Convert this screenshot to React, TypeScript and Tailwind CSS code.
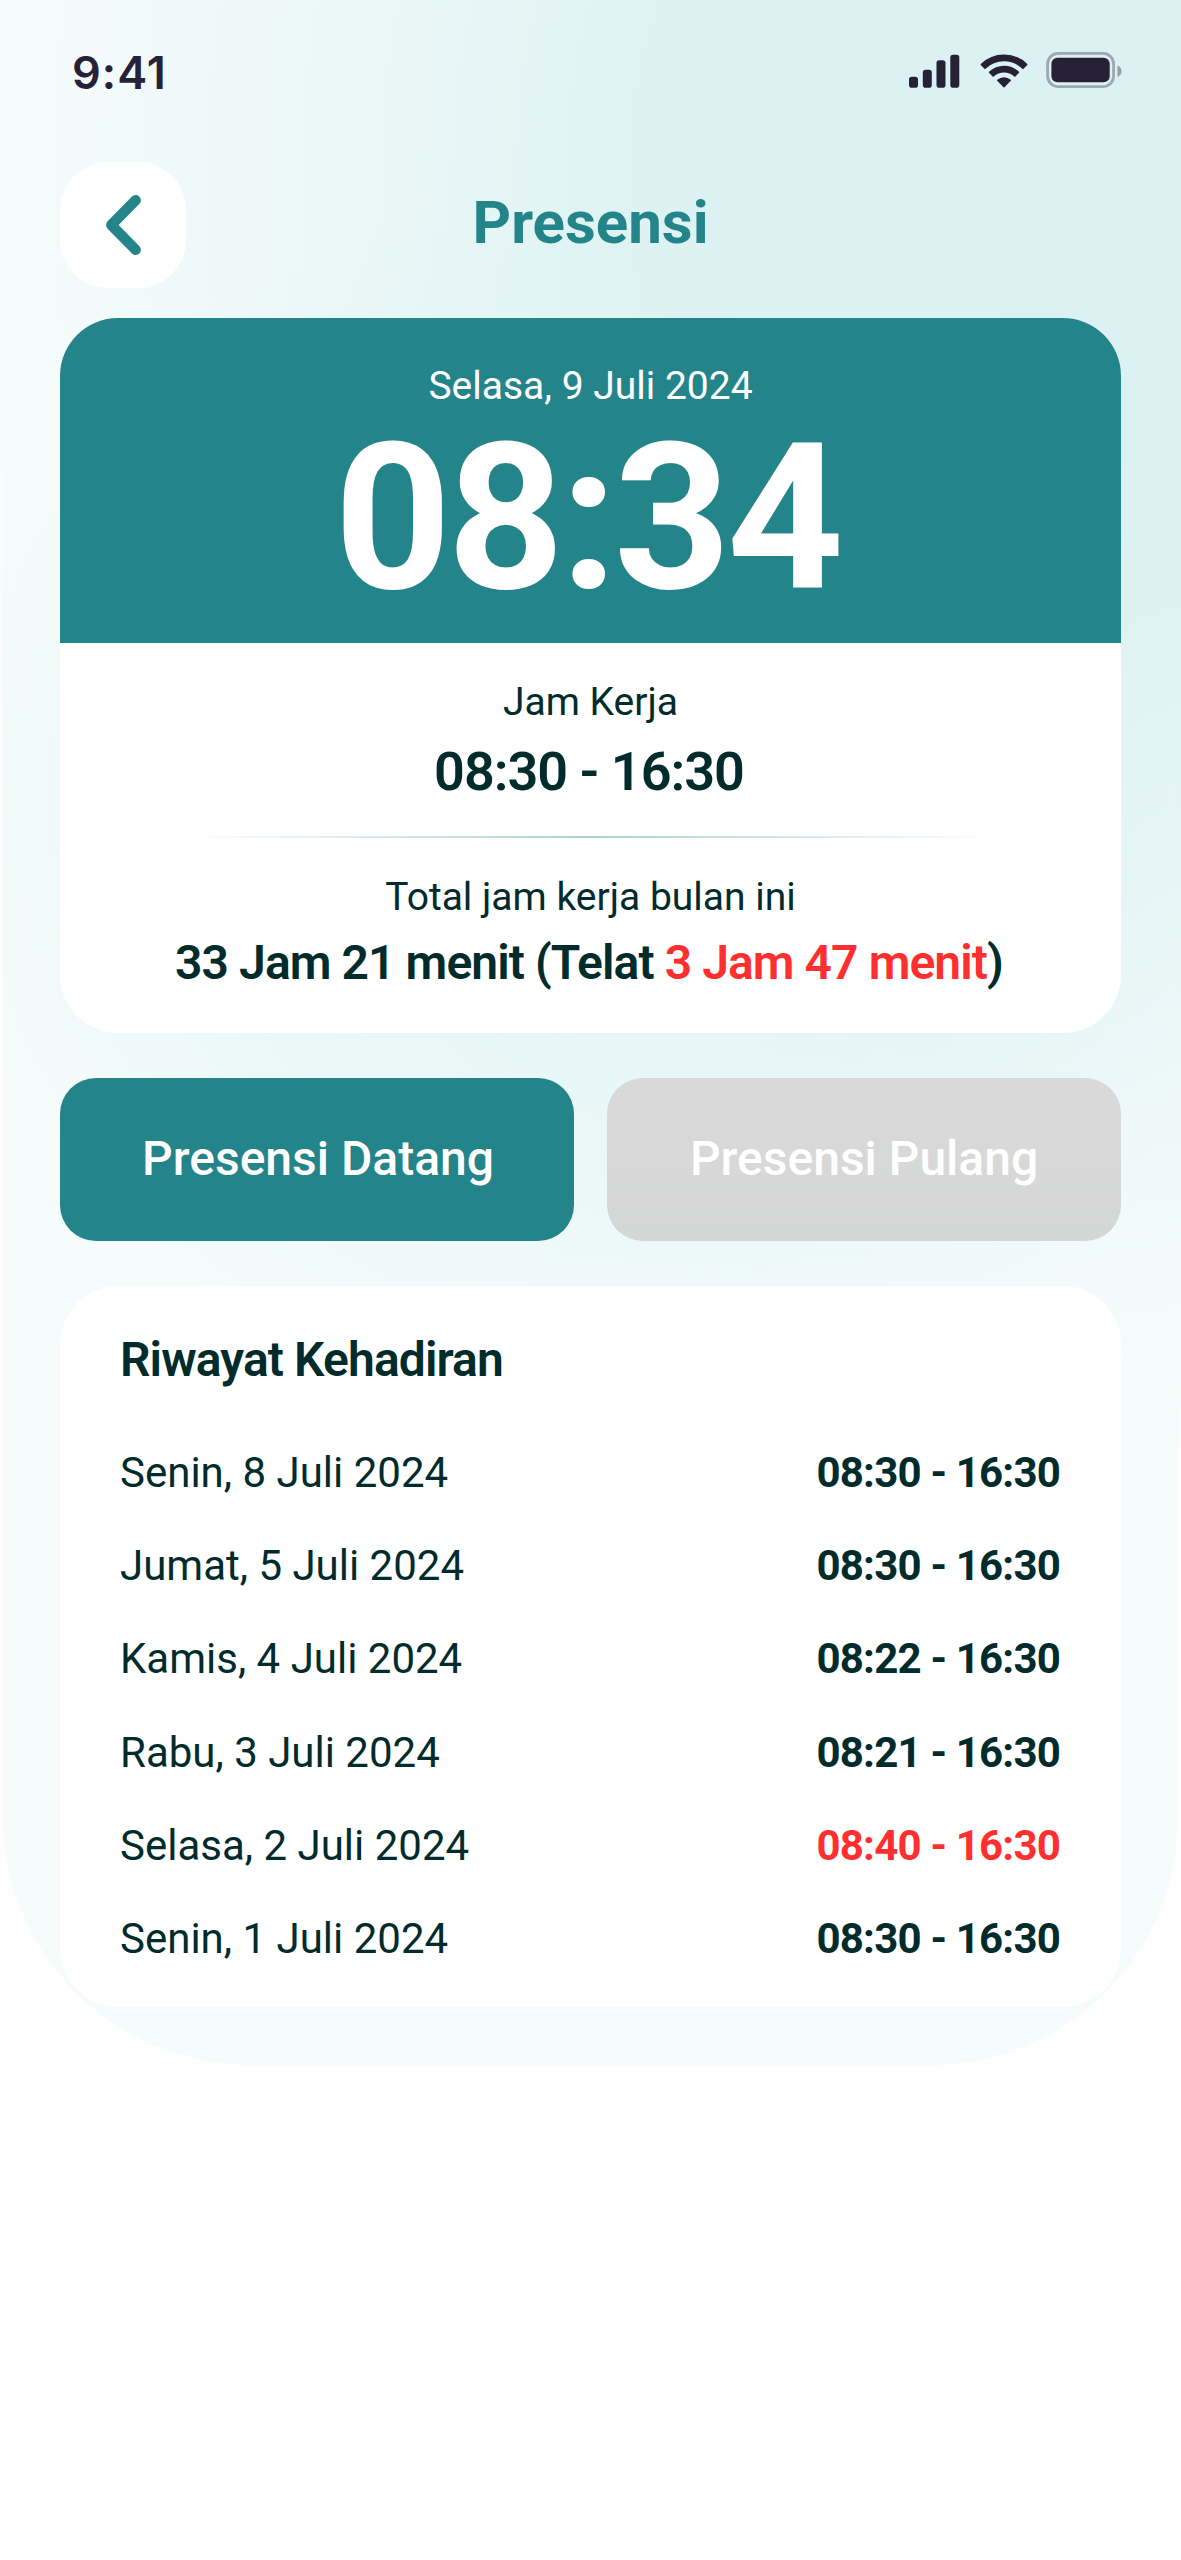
import React from "react";
import clsx from "clsx";

interface Attendance {
  date: string;
  hours: string;
  late?: boolean;
}

const history: Attendance[] = [
  { date: "Senin, 8 Juli 2024", hours: "08:30 - 16:30" },
  { date: "Jumat, 5 Juli 2024", hours: "08:30 - 16:30" },
  { date: "Kamis, 4 Juli 2024", hours: "08:22 - 16:30" },
  { date: "Rabu, 3 Juli 2024", hours: "08:21 - 16:30" },
  { date: "Selasa, 2 Juli 2024", hours: "08:40 - 16:30", late: true },
  { date: "Senin, 1 Juli 2024", hours: "08:30 - 16:30" },
];

function SignalIcon() {
  return (
    <svg width="51" height="34" viewBox="0 0 51 34" fill="#272137">
      <rect x="0" y="22.7" width="9" height="11" rx="2.8" />
      <rect x="13.8" y="15.8" width="9" height="17.9" rx="2.8" />
      <rect x="27.5" y="6.2" width="9" height="27.5" rx="2.8" />
      <rect x="41.3" y="0.8" width="9" height="32.9" rx="2.8" />
    </svg>
  );
}

function WifiIcon() {
  return (
    <svg width="48" height="34" viewBox="0 0 48 34" fill="#272137" stroke="#272137" strokeWidth="1.6" strokeLinejoin="round">
      <path d="M1.3 10.5A32.4 32.4 0 0 1 46.7 10.5L43 14.3A27.2 27.2 0 0 0 5 14.3Z" />
      <path d="M9.6 18.3A20.6 20.6 0 0 1 38.4 18.3L34.8 22A15.6 15.6 0 0 0 13.2 22Z" />
      <path d="M17.8 26.3A9.4 9.4 0 0 1 30.2 26.3L24 32.6Z" />
    </svg>
  );
}

function BatteryIcon() {
  return (
    <svg width="77" height="36" viewBox="0 0 77 36" fill="none">
      <rect x="1.6" y="1.4" width="66" height="33.2" rx="10.5" stroke="#272137" strokeOpacity="0.35" strokeWidth="2.8" />
      <path d="M71.5 13.5v11.6c2.6-1 4-3.3 4-5.8s-1.4-4.8-4-5.8Z" fill="#272137" fillOpacity="0.4" />
      <rect x="5.4" y="5.8" width="58.3" height="24.5" rx="6" fill="#272137" />
    </svg>
  );
}

function StatusBar() {
  return (
    <div className="flex h-[162px] items-start justify-between pt-[46px] pr-[58px] pl-[72px]">
      <span className="font-['Inter',sans-serif] text-[45px] leading-[54px] font-semibold tracking-[1px] text-[#272137]">
        9:41
      </span>
      <div className="flex h-[42px] items-end">
        <div className="mr-5">
          <SignalIcon />
        </div>
        <div className="mr-[18px]">
          <WifiIcon />
        </div>
        <BatteryIcon />
      </div>
    </div>
  );
}

function Header() {
  return (
    <header className="grid h-[126px] grid-cols-[126px_1fr_126px] items-center">
      <button className="flex size-[126px] items-center justify-center rounded-[48px] bg-white">
        <svg width="40" height="64" viewBox="0 0 40 64" fill="none">
          <path d="M32.7 7.2 8.3 32l24.4 24.8" stroke="#23848a" strokeWidth="10.4" strokeLinecap="round" strokeLinejoin="round" />
        </svg>
      </button>
      <h1 className="pb-[5px] text-center text-[60px] leading-[70px] font-bold text-[#23848a]">Presensi</h1>
    </header>
  );
}

function ClockCard() {
  return (
    <section className="mt-[30px] h-[715px] overflow-hidden rounded-[58px] bg-white text-center">
      <div className="h-[325px] bg-[#23848a] pt-[45px] text-white">
        <p className="text-[39px] leading-[46px]">Selasa, 9 Juli 2024</p>
        <p className="mt-2 pr-[7px] text-[204px] leading-[204px] font-bold tracking-[-4px]">08:34</p>
      </div>
      <div className="flex flex-col items-center pt-9">
        <p className="text-[39px] leading-[46px]">Jam Kerja</p>
        <p className="mt-[15px] pr-[3px] text-[54px] leading-16 font-semibold tracking-[-1px]">08:30 - 16:30</p>
        <div className="mt-[32px] h-[2px] w-[800px] bg-linear-to-r from-transparent via-[#a9d1d6] to-transparent" />
        <p className="mt-[36px] text-[39px] leading-[46px]">Total jam kerja bulan ini</p>
        <p className="mt-[15px] pr-[3px] text-[48px] leading-14 font-semibold tracking-[-0.92px]">
          33 Jam 21 menit (Telat <span className="text-[#ff2f2f]">3 Jam 47 menit</span>)
        </p>
      </div>
    </section>
  );
}

function Actions() {
  return (
    <div className="mt-[45px] grid grid-cols-2 gap-[33px]">
      <button className="h-[163px] rounded-[36px] bg-[#23848a] pb-[2px] pl-[2px] text-[48px] font-medium text-white">
        Presensi Datang
      </button>
      <button
        disabled
        className="h-[163px] rounded-[36px] bg-linear-to-b from-[#d9d9d9] to-[#d5d7d6] pb-[2px] text-[48px] font-medium text-white"
      >
        Presensi Pulang
      </button>
    </div>
  );
}

function History() {
  return (
    <section className="mt-[45px] h-[721px] rounded-[58px] bg-white px-[60px] pt-[46px]">
      <h2 className="text-[48px] leading-14 font-semibold tracking-[-0.88px]">Riwayat Kehadiran</h2>
      <ul className="mt-[60px] flex flex-col gap-[43.2px]">
        {history.map((item) => (
          <li key={item.date} className="flex items-center justify-between text-[42px] leading-[50px]">
            <span>{item.date}</span>
            <span className={clsx("pr-px font-bold tracking-[-0.8px]", item.late && "text-[#ff2f2f]")}>{item.hours}</span>
          </li>
        ))}
      </ul>
    </section>
  );
}

export default function App() {
  return (
    <div className="relative isolate h-[2560px] w-full overflow-hidden bg-[#fefefe] font-['Roboto',sans-serif] text-[#022b2c]">
      {/* soft teal glow behind the content */}
      <div className="absolute inset-x-[3px] -top-10 -z-10 h-[2105px] rounded-b-[248px] bg-[#f5fcfb]" />
      <div className="absolute inset-x-0 top-0 -z-10 h-[1500px] bg-[radial-gradient(ellipse_680px_620px_at_620px_800px,#def3f388_0%,#def3f377_60%,transparent_100%),radial-gradient(ellipse_1120px_1320px_at_1020px_180px,#dbf1f2_0%,#dcf1f2_27%,#e1f4f3_40%,#eaf7f7_58%,#f0f9fa_74%,#f5fcfb_90%,transparent_100%)]" />
      <StatusBar />
      <main className="px-[60px]">
        <Header />
        <ClockCard />
        <Actions />
        <History />
      </main>
    </div>
  );
}
